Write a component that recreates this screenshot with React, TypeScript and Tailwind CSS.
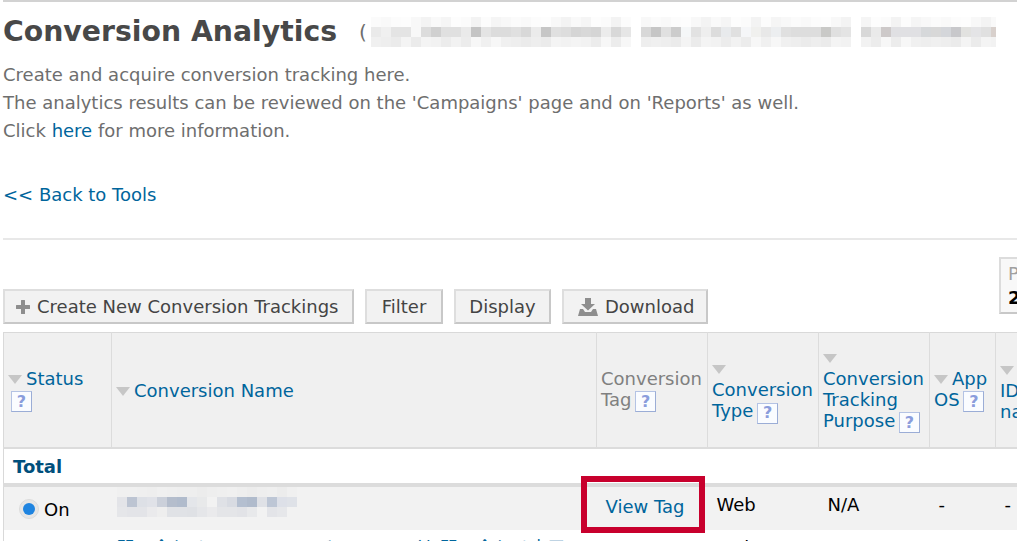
import React from "react";

const titleMid = [
  "eaeaea","f0f0f0","e4e4e4","e4e4e4","f8f8f8","dcdcdc","d0d0d0","e0e0e0","e0e0e0","eaeaea","c4c4c4","e4e4e4","dcdcdc","dcdcdc",
  "e0e0e0","d8d8d8","ebebeb","c6c6c6","e0e0e0","dddddd","d5d5d5","d8d8d8","d5d5d5","ececec","d8d8d8","e6e6e6","ffffff",
  "d8d8d8","c6c6c6","e0e0e0","cccccc","f5f7f8","e2e2e2","eeeeee","dcdcdc","e8eaec","e0e0e0","f5f6f8","f0f0ee","e8e8e8","eceef0",
  "e0e0e0","dddddd","dddddd","dddddd","c9c9c7","e0e0e0","e4e4e4","ffffff",
  "d8d8d8","eaeaea","cdc9c9","e0e0e3","e0e0e3","e0e0e3","d6d8da","d8d8d8","d4d6da","c8c8cb","e2e2e0","e4e4e6","e0e0e0","d8d0cc",
];
const titleBot = titleMid.map((c, i) =>
  c === "ffffff" ? "ffffff" : ["f0f0f0","ececec","f4f4f4","eeeeee","f7f7f7","f2f2f2","ebebeb"][(i * 3 + (i >> 2)) % 7]
);
const titleTop = titleMid.map((c, i) =>
  c === "ffffff" ? "ffffff" : ["fbfbfb","f8f8f8","fdfdfd","f5f5f5","fcfcfc","f9f9f9","f3f3f3"][(i * 5 + (i >> 1)) % 7]
);

const nameTop = ["f0f0f0","f0f0f0","efefef","eeeeee","f0f0f0","efefef","eeeeee","eeeeee","ececec","eeeeee","efefef","f0f0f0","eeeeee","ececec","eeeeee","efefef","ececec","f0f0f0"];
const nameMid = ["e3e4e8","bcc4d2","dde0e6","e0e2e8","cbd0da","b4bdcc","b0bbcc","e4e6ea","e8e9ea","f2f2f2","dfe1e6","d8dbe2","b4bfd0","b0bbcc","dfe1e6","bdc6d5","dde0e8","dfe2e8"];
const nameBot = ["e5e6e9","e3e4e8","e3e4e8","eaeaec","eeeeee","e0e2e6","e0e2e6","dfe1e5","e5e6e9","eaeaec","e4e5e8","e4e5e8","e2e3e7","e8e9eb","f2f2f2","e3e4e8","e6e7ea","f2f2f2"];

function Mosaic({ rows, width }: { rows: string[][]; width: number }) {
  return (
    <svg width={width} height={rows.length * 10} shapeRendering="crispEdges" className="block">
      {rows.map((r, y) =>
        r.map((c, x) => <rect key={`${x}-${y}`} x={x * 10} y={y * 10} width={10} height={10} fill={`#${c}`} />)
      )}
    </svg>
  );
}

function Help() {
  return (
    <span className="-ml-[2px] inline-flex h-[21px] w-[21px] items-center justify-center border border-[#b4c3e4] border-b-[#9badd6] border-r-[#9badd6] bg-[#fafcff] align-[-1px] text-[16px] font-bold leading-none text-[#8a9ddc]">
      ?
    </span>
  );
}

function Arrow() {
  return (
    <svg width="14" height="9" viewBox="0 0 14 9" className="mr-[4px] inline-block align-[1px]">
      <path d="M0 0H14L7 9Z" fill="#c6c6c6" />
    </svg>
  );
}

function Btn({ children, icon, className }: { children: React.ReactNode; icon?: React.ReactNode; className: string }) {
  return (
    <div className={`flex h-[35px] items-center gap-[7px] border-2 border-[#dedede] border-b-[#c8c8c8] border-r-[#c8c8c8] bg-[#f2f2f2] text-[#444] ${className}`}>
      {icon}
      {children}
    </div>
  );
}

const link = "text-[#00659c]";
const th = "border-r border-[#dcdcdc] bg-[#f0f0f0] px-[4px] text-left align-middle font-normal leading-[21px]";

export default function App() {
  return (
    <div className="relative h-[541px] w-[1017px] overflow-hidden bg-white font-['DejaVu_Sans','Liberation_Sans',sans-serif] text-[18px] text-[#6e6e6e]">
      <div className="ml-[3px] h-[2px] bg-[#d2d2d2]" />
      <div className="flex h-[59px] items-center pl-[3px]">
        <h1 className="pt-[2px] text-[28.3px] font-bold leading-none text-[#484848]">Conversion Analytics</h1>
        <span className="ml-[22px] text-[20px]">(</span>
        <div className="ml-[4px] mt-[1px]">
          <Mosaic rows={[titleTop, titleMid, titleBot]} width={625} />
        </div>
      </div>
      <div className="pl-[3px] leading-[28px]">
        <p>Create and acquire conversion tracking here.</p>
        <p>The analytics results can be reviewed on the 'Campaigns' page and on 'Reports' as well.</p>
        <p>
          Click <span className={link}>here</span> for more information.
        </p>
      </div>
      <p className={`mt-[36px] pl-[3px] leading-[28px] ${link}`}>&lt;&lt; Back to Tools</p>
      <div className="ml-[3px] mt-[29px] h-[2px] bg-[#e8e8e8]" />

      <div className="mt-[28px] flex h-[56px] items-end gap-[11px] pl-[3px]">
        <Btn
          className="w-[351px] pl-[11px]"
          icon={
            <svg width="14" height="14" viewBox="0 0 14 14">
              <path d="M5 0.5Q5 0 5.5 0H8.5Q9 0 9 0.5V5H13.5Q14 5 14 5.5V8.5Q14 9 13.5 9H9V13.5Q9 14 8.5 14H5.5Q5 14 5 13.5V9H0.5Q0 9 0 8.5V5.5Q0 5 0.5 5H5Z" fill="#8e8e8e" />
            </svg>
          }
        >
          Create New Conversion Trackings
        </Btn>
        <Btn className="w-[78px] justify-center">Filter</Btn>
        <Btn className="w-[97px] justify-center">Display</Btn>
        <Btn
          className="w-[146px] pl-[14px]"
          icon={
            <svg width="20" height="18" viewBox="0 0 20 18">
              <path d="M7 0H13V6H17L10 12.5L3 6H7Z" fill="#8e8e8e" />
              <path d="M2 11H5L7 14H13L15 11H18L20 18H0Z" fill="#8e8e8e" />
            </svg>
          }
        >
          Download
        </Btn>
      </div>

      <div className="absolute left-[999px] top-[257px] h-[57px] w-[40px] border-2 border-[#dcdcdc] border-b-[#c8c8c8] bg-[#f8f8f8] pl-[7px] pt-[3px]">
        <div className="leading-[24px] text-[#a0a0a0]">P</div>
        <div className="font-bold leading-[24px] text-black">2</div>
      </div>

      <table className="ml-[3px] mt-[8px] w-[1100px] table-fixed border-collapse border-l border-t border-[#d9d9d9]">
        <colgroup>
          <col className="w-[108px]" />
          <col className="w-[485px]" />
          <col className="w-[111px]" />
          <col className="w-[111px]" />
          <col className="w-[111px]" />
          <col className="w-[66px]" />
          <col className="w-[108px]" />
        </colgroup>
        <thead>
          <tr className="h-[115px] border-b-2 border-[#dcdcdc]">
            <th className={th}>
              <Arrow />
              <span className={link}>Status</span>
              <br />
              <span className="ml-[5px]"><Help /></span>
            </th>
            <th className={`${th} pt-[2px]`}>
              <Arrow />
              <span className={link}>Conversion Name</span>
            </th>
            <th className={`${th} text-[#808080]`}>
              Conversion
              <br />
              Tag <Help />
            </th>
            <th className={`${th} pt-[2px]`}>
              <Arrow />
              <br />
              <span className={link}>
                Conversion
                <br />
                Type <Help />
              </span>
            </th>
            <th className={th}>
              <Arrow />
              <br />
              <span className={link}>
                Conversion
                <br />
                Tracking
                <br />
                Purpose <Help />
              </span>
            </th>
            <th className={th}>
              <Arrow />
              <span className={link}>App</span>
              <br />
              <span className={link}>OS</span> <Help />
            </th>
            <th className={`${th} pt-[2px]`}>
              <Arrow />
              <br />
              <span className={link}>
                ID
                <br />
                name
              </span>
            </th>
          </tr>
        </thead>
        <tbody>
          <tr className="h-[37px] border-b-4 border-[#dcdcdc] bg-white">
            <td colSpan={7} className="px-[9px] pt-[2px] font-bold text-[#004f7c]">Total</td>
          </tr>
          <tr className="h-[45px] bg-[#f2f2f2] text-black">
            <td className="pl-[15px]">
              <div className="flex items-center gap-[5px] pt-[2px]">
                <span className="flex h-[20px] w-[20px] items-center justify-center rounded-full border border-[#dcdcdc] bg-[#e6e6e6]">
                  <span className="h-[12px] w-[12px] rounded-full bg-[#1f84e0]" />
                </span>
                On
              </div>
            </td>
            <td className="px-[5px] pb-[12px]">
              <Mosaic rows={[nameTop, nameMid, nameBot]} width={180} />
            </td>
            <td className={`pb-[4px] pl-[9px] ${link}`}>View Tag</td>
            <td className="pb-[8px] pl-[9px]">Web</td>
            <td className="pb-[8px] pl-[9px]">N/A</td>
            <td className="pb-[8px] pl-[9px]">-</td>
            <td className="pb-[8px] pl-[9px]">-</td>
          </tr>
          <tr className="h-[30px] bg-white">
            <td />
            <td className={`px-[5px] pt-[4px] align-top leading-[26px] ${link} font-['Noto_Sans_CJK_JP',sans-serif]`}>
              問い合わせページのコンバージョン（お問い合わせ完了ページ）
            </td>
            <td />
            <td className="pl-[9px] pt-[7px] align-top leading-[21px] text-black">Web</td>
            <td className="pl-[9px] pt-[7px] align-top leading-[21px] text-black">N/A</td>
            <td colSpan={2} />
          </tr>
        </tbody>
      </table>

      <div className="absolute left-[581px] top-[476px] h-[57px] w-[124px] border-[6px] border-[#c8002d]" />
    </div>
  );
}
